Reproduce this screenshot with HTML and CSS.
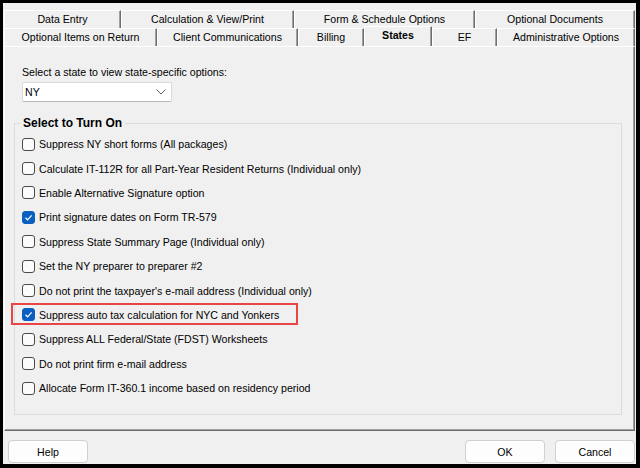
FILE: index.html
```html
<!DOCTYPE html>
<html>
<head>
	<meta charset="UTF-8">
	<title>Options - States</title>
	<link rel="stylesheet" href="styles.css">
</head>
<body>
	<div class="dialog">

		<div class="tabs">
			<div class="tabrow">
				<div class="tab w117">Data Entry</div>
				<div class="tab w173">Calculation &amp; View/Print</div>
				<div class="tab w181">Form &amp; Schedule Options</div>
				<div class="tab w160">Optional Documents</div>
			</div>
			<div class="tabrow">
				<div class="tab w153">Optional Items on Return</div>
				<div class="tab w141">Client Communications</div>
				<div class="tab w66">Billing</div>
				<div class="tab w68 active">States</div>
				<div class="tab w65">EF</div>
				<div class="tab w138">Administrative Options</div>
			</div>
		</div>

		<div class="panel">
			<div class="label">Select a state to view state-specific options:</div>
			<div class="select">
				<span>NY</span>
				<svg width="10" height="6" viewBox="0 0 10 6"><polyline points="0.5,0.5 5,5 9.5,0.5" fill="none" stroke="#606060" stroke-width="1"/></svg>
			</div>

			<fieldset class="group">
				<legend>Select to Turn On</legend>
				<div class="row"><span class="box"></span>Suppress NY short forms (All packages)</div>
				<div class="row"><span class="box"></span>Calculate IT-112R for all Part-Year Resident Returns (Individual only)</div>
				<div class="row"><span class="box"></span>Enable Alternative Signature option</div>
				<div class="row"><span class="box on"><svg width="11" height="11" viewBox="0 0 11 11"><polyline points="2.5,5.8 4.6,7.8 8.6,3.4" fill="none" stroke="#fff" stroke-width="1.2"/></svg></span>Print signature dates on Form TR-579</div>
				<div class="row"><span class="box"></span>Suppress State Summary Page (Individual only)</div>
				<div class="row"><span class="box"></span>Set the NY preparer to preparer #2</div>
				<div class="row"><span class="box"></span>Do not print the taxpayer's e-mail address (Individual only)</div>
				<div class="row marked"><span class="box on"><svg width="11" height="11" viewBox="0 0 11 11"><polyline points="2.5,5.8 4.6,7.8 8.6,3.4" fill="none" stroke="#fff" stroke-width="1.2"/></svg></span>Suppress auto tax calculation for NYC and Yonkers</div>
				<div class="row"><span class="box"></span>Suppress ALL Federal/State (FDST) Worksheets</div>
				<div class="row"><span class="box"></span>Do not print firm e-mail address</div>
				<div class="row"><span class="box"></span>Allocate Form IT-360.1 income based on residency period</div>
			</fieldset>
		</div>

		<div class="footer">
			<button class="btn">Help</button>
			<button class="btn push">OK</button>
			<button class="btn">Cancel</button>
		</div>

	</div>
</body>
</html>
```

FILE: styles.css
```css
body {
	margin: 0;
	background: #000;
	width: 640px;
	height: 468px;
	overflow: hidden;
}
.dialog {
	margin: 3px 4px 4px 3px;
	width: 633px;
	height: 461px;
	background: #f0f0f0;
	font-family: "Liberation Sans", Arial, sans-serif;
	font-size: 10.6px;
	color: #000;
}

/* tabs */
.tabs { padding: 7px 0 0 1px; }
.tabrow { display: flex; height: 18px; }
.tab {
	box-sizing: border-box;
	display: flex;
	align-items: center;
	justify-content: center;
	border-top: 1px solid #fff;
	border-left: 1px solid #fff;
	border-right: 1px solid #6e6e6e;
	box-shadow: inset -1px 0 #a0a0a0;
	background: #f0f0f0;
	white-space: nowrap;
	padding-bottom: 1px;
}
.tab.active {
	font-weight: bold;
	height: 20px;
	margin-top: -2px;
	position: relative;
	z-index: 1;
	padding-bottom: 4px;
}
.w117 { width: 117px; }
.w173 { width: 173px; }
.w181 { width: 181px; }
.w160 { width: 160px; }
.w153 { width: 153px; }
.w141 { width: 141px; }
.w66 { width: 66px; }
.w68 { width: 68px; }
.w65 { width: 65px; }
.w138 { width: 138px; }

/* page */
.panel {
	box-sizing: border-box;
	margin-left: 1px;
	width: 631px;
	height: 385px;
	border-top: 1px solid #fff;
	border-left: 1px solid #fff;
	border-right: 1px solid #6e6e6e;
	border-bottom: 1px solid #6e6e6e;
	box-shadow: inset -1px -1px #a0a0a0;
	padding-top: 19px;
}
.label {
	margin-left: 17px;
	line-height: 13px;
}
.select {
	box-sizing: border-box;
	margin: 3px 0 0 17px;
	width: 150px;
	height: 20px;
	background: #fff;
	border: 1px solid #d9d9d9;
	border-bottom-color: #b8b8b8;
	border-radius: 2px;
	display: flex;
	align-items: center;
	justify-content: space-between;
	padding: 0 5px 0 2px;
}

.group {
	box-sizing: border-box;
	margin: 14px 0 0 9px;
	width: 608px;
	height: 299px;
	border: 1px solid #dcdcdc;
	padding: 2px 0 0 7px;
}
.group legend {
	font-size: 12px;
	font-weight: bold;
	padding: 0 3px;
	margin-left: -2px;
	line-height: 14px;
}
.row {
	display: flex;
	align-items: center;
	gap: 4px;
	height: 24.4px;
	white-space: nowrap;
}
.box {
	box-sizing: border-box;
	width: 13px;
	height: 13px;
	border: 1px solid #4a4a4a;
	border-radius: 3px;
	background: #fbfbfb;
	display: flex;
	align-items: center;
	justify-content: center;
}
.box.on {
	background: #0a5fc0;
	border-color: #0a5fc0;
}
.marked { position: relative; }
.marked::after {
	content: "";
	position: absolute;
	left: -11px;
	top: 0;
	width: 287px;
	height: 22px;
	box-sizing: border-box;
	border: 2px solid #e84646;
}

/* buttons */
.footer {
	display: flex;
	padding: 9px 1px 0 5px;
	gap: 10px;
}
.btn {
	box-sizing: border-box;
	width: 80px;
	height: 23px;
	background: #fdfdfd;
	border: 1px solid #d0d0d0;
	border-radius: 4px;
	font-family: "Liberation Sans", Arial, sans-serif;
	font-size: 10.6px;
	color: #000;
	padding: 0;
}
.btn.push { margin-left: auto; }
```
